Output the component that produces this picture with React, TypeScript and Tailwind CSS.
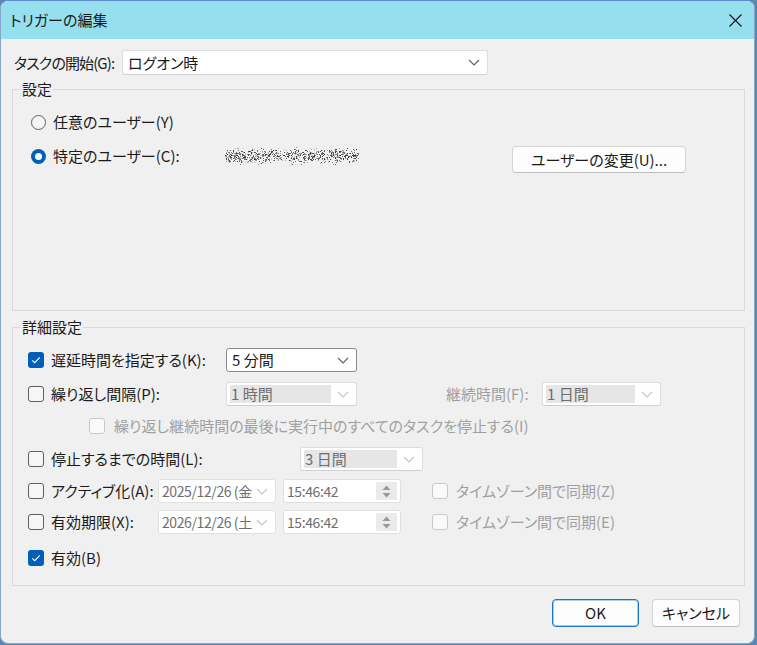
import React from "react";
import clsx from "clsx";

// pseudo random dots for the masked user name
const noiseDots: { x: number; y: number; o: number }[] = [];
let seed = 91;
const rand = () => {
  seed = (seed * 1103515245 + 12345) % 2147483648;
  return seed / 2147483648;
};
for (let i = 0; i < 900; i++) {
  const x = Math.floor(rand() * 134);
  const y = Math.floor(((rand() + rand() + rand()) / 3) * 20);
  const o = 0.1 + rand() * 0.8;
  noiseDots.push({ x, y, o });
}

const Chevron: React.FC<{ color?: string }> = ({ color = "#606060" }) => (
  <svg width="12" height="7" viewBox="0 0 12 7" fill="none">
    <path d="M1 1l5 5 5-5" stroke={color} strokeWidth="1.1" />
  </svg>
);

type CheckState = "checked" | "unchecked" | "disabled";

const Check: React.FC<{ state: CheckState }> = ({ state }) => {
  if (state === "checked") {
    return (
      <span className="flex h-[16px] w-[16px] shrink-0 items-center justify-center rounded-[3px] bg-[#005fb8]">
        <svg width="10" height="8" viewBox="0 0 10 8" fill="none">
          <path d="M1.2 4.3l2.5 2.4L8.8 1.4" stroke="white" strokeWidth="1.1" />
        </svg>
      </span>
    );
  }
  return (
    <span
      className={clsx(
        "h-[16px] w-[16px] shrink-0 rounded-[3px] border",
        state === "disabled" ? "border-[#c9c9c9] bg-[#fafafa]" : "border-[#5f5f5f] bg-[#f6f6f6]"
      )}
    />
  );
};

const Radio: React.FC<{ checked?: boolean }> = ({ checked }) =>
  checked ? (
    <span className="flex h-[15px] w-[15px] shrink-0 items-center justify-center rounded-full bg-[#005fb8]">
      <span className="h-[7px] w-[7px] rounded-full bg-white" />
    </span>
  ) : (
    <span className="h-[15px] w-[15px] shrink-0 rounded-full border border-[#606060] bg-[#f5f5f5]" />
  );

const Select: React.FC<{ value: string; className: string; disabled?: boolean; strong?: boolean }> = ({
  value,
  className,
  disabled,
  strong,
}) => (
  <div
    className={clsx(
      "flex h-[24px] shrink-0 items-center rounded-[3px] border bg-white",
      strong ? "border-[#8a8a8a]" : "border-[#dddddd] border-b-[#cfcfcf]",
      className
    )}
  >
    {disabled ? (
      <div className="ml-[3px] flex h-[18px] flex-1 items-center bg-[#e6e6e6] px-[1px] text-[#6e6e6e]">{value}</div>
    ) : (
      <div className="flex-1 whitespace-nowrap pl-[5px]">{value}</div>
    )}
    <div className="flex w-[25px] justify-center pr-[2px]">
      <Chevron color={disabled ? "#c4c4c4" : "#606060"} />
    </div>
  </div>
);

const DateBox: React.FC<{ value: string }> = ({ value }) => (
  <div className="flex h-[24px] w-[118px] shrink-0 items-center rounded-[3px] border border-[#e0e0e0] bg-white">
    <div className="flex-1 whitespace-nowrap pl-[3px] text-[14px] tracking-[-0.4px] text-[#6e6e6e]">{value}</div>
    <div className="flex w-[19px] justify-start">
      <Chevron color="#c4c4c4" />
    </div>
  </div>
);

const TimeBox: React.FC<{ value: string }> = ({ value }) => (
  <div className="flex h-[24px] w-[118px] shrink-0 items-center rounded-[3px] border border-[#e0e0e0] bg-white">
    <div className="flex-1 pl-[3px] text-[14px] tracking-[-0.4px] text-[#6e6e6e]">{value}</div>
    <div className="mr-[3px] flex h-[18px] w-[21px] flex-col items-center justify-center gap-[3px] bg-[#ebebeb]">
      <svg width="9" height="5" viewBox="0 0 9 5">
        <path d="M0.5 5L4.5 0.5 8.5 5z" fill="#9a9a9a" />
      </svg>
      <svg width="9" height="5" viewBox="0 0 9 5">
        <path d="M0.5 0L4.5 4.5 8.5 0z" fill="#9a9a9a" />
      </svg>
    </div>
  </div>
);

const GroupBox: React.FC<{ label: string; className: string; children: React.ReactNode }> = ({
  label,
  className,
  children,
}) => (
  <div className={clsx("relative ml-[11px] w-[733px] border border-[#dadada]", className)}>
    <span className="absolute -top-[11px] left-[8px] bg-[#f0f0f0] px-[1px] leading-[20px]">{label}</span>
    {children}
  </div>
);

const App: React.FC = () => {
  return (
    <div className="h-[645px] w-[757px] bg-[#5b86b3] font-['Noto_Sans_CJK_JP',sans-serif] text-[15px] leading-[20px] text-[#1b1b1b] [font-feature-settings:'palt']">
      <div className="flex h-[644px] w-[755px] flex-col overflow-hidden rounded-[8px] border border-[#8aa6c6] border-t-[#5c8fc6] bg-[#f0f0f0]">
        {/* title bar */}
        <div className="flex h-[38px] shrink-0 items-center justify-between bg-[#95dfef] pl-[9px] pr-[12px]">
          <span>トリガーの編集</span>
          <svg width="13" height="13" viewBox="0 0 13 13" fill="none">
            <path d="M0.5 0.5l12 12M12.5 0.5l-12 12" stroke="#111" strokeWidth="1.1" />
          </svg>
        </div>

        {/* begin the task */}
        <div className="mt-[11px] flex h-[25px] items-center pl-[13px]">
          <span className="w-[108px] whitespace-nowrap tracking-[-0.9px]">タスクの開始(G):</span>
          <Select value="ログオン時" className="h-[25px] w-[366px]" />
        </div>

        {/* settings */}
        <GroupBox label="設定" className="mt-[14px] h-[222px] pl-[18px] pt-[22px]">
          <div className="flex h-[20px] items-center gap-[7px]">
            <Radio />
            <span>任意のユーザー(Y)</span>
          </div>
          <div className="mt-[14px] flex items-start">
            <div className="flex h-[20px] w-[194px] items-center gap-[7px]">
              <Radio checked />
              <span>特定のユーザー(C):</span>
            </div>
            <div className="flex h-[20px] items-center">
              <svg width="134" height="20" viewBox="0 0 134 20">
                {noiseDots.map((d, i) => (
                  <rect key={i} x={d.x} y={d.y} width="1" height="1" fill="#2a2a2a" opacity={d.o} />
                ))}
              </svg>
            </div>
            <button className="ml-[153px] flex h-[27px] w-[174px] items-center justify-center rounded-[4px] border border-[#d3d3d3] border-b-[#bdbdbd] bg-[#fdfdfd]">
              ユーザーの変更(U)...
            </button>
          </div>
        </GroupBox>

        {/* advanced settings */}
        <GroupBox label="詳細設定" className="mt-[16px] h-[259px] pl-[15px] pt-[20px]">
          <div className="flex h-[24px] items-center">
            <div className="flex w-[198px] items-center gap-[7px]">
              <Check state="checked" />
              <span className="whitespace-nowrap">遅延時間を指定する(K):</span>
            </div>
            <Select value="5 分間" className="w-[131px]" strong />
          </div>

          <div className="mt-[10px] flex h-[24px] items-center">
            <div className="flex w-[198px] items-center gap-[7px]">
              <Check state="unchecked" />
              <span>繰り返し間隔(P):</span>
            </div>
            <Select value="1 時間" className="w-[131px]" disabled />
            <span className="ml-[89px] w-[96px] text-[#a0a0a0]">継続時間(F):</span>
            <Select value="1 日間" className="w-[119px]" disabled />
          </div>

          <div className="mt-[8px] flex h-[24px] items-center gap-[9px] pl-[61px]">
            <Check state="disabled" />
            <span className="text-[#a0a0a0]">繰り返し継続時間の最後に実行中のすべてのタスクを停止する(I)</span>
          </div>

          <div className="mt-[9px] flex h-[24px] items-center">
            <div className="flex w-[272px] items-center gap-[7px]">
              <Check state="unchecked" />
              <span>停止するまでの時間(L):</span>
            </div>
            <Select value="3 日間" className="w-[123px]" disabled />
          </div>

          <div className="mt-[8px] flex h-[24px] items-center">
            <div className="flex w-[130px] items-center gap-[7px]">
              <Check state="unchecked" />
              <span className="whitespace-nowrap">アクティブ化(A):</span>
            </div>
            <DateBox value="2025/12/26 (金" />
            <div className="ml-[7px]">
              <TimeBox value="15:46:42" />
            </div>
            <div className="ml-[31px] flex items-center gap-[8px]">
              <Check state="disabled" />
              <span className="text-[#a0a0a0]">タイムゾーン間で同期(Z)</span>
            </div>
          </div>

          <div className="mt-[7px] flex h-[24px] items-center">
            <div className="flex w-[130px] items-center gap-[7px]">
              <Check state="unchecked" />
              <span>有効期限(X):</span>
            </div>
            <DateBox value="2026/12/26 (土" />
            <div className="ml-[7px]">
              <TimeBox value="15:46:42" />
            </div>
            <div className="ml-[31px] flex items-center gap-[8px]">
              <Check state="disabled" />
              <span className="text-[#a0a0a0]">タイムゾーン間で同期(E)</span>
            </div>
          </div>

          <div className="mt-[12px] flex h-[24px] items-center gap-[7px]">
            <Check state="checked" />
            <span>有効(B)</span>
          </div>
        </GroupBox>

        {/* buttons */}
        <div className="mt-[13px] flex justify-end gap-[13px] pr-[14px]">
          <button className="flex h-[28px] w-[87px] items-center justify-center rounded-[4px] border border-[#1a73c9] bg-[#fdfdfd] shadow-[inset_0_0_0_1px_#a9cdee]">
            OK
          </button>
          <button className="flex h-[28px] w-[88px] items-center justify-center rounded-[4px] border border-[#d3d3d3] border-b-[#bdbdbd] bg-[#fdfdfd]">
            キャンセル
          </button>
        </div>
      </div>
    </div>
  );
};

export default App;
